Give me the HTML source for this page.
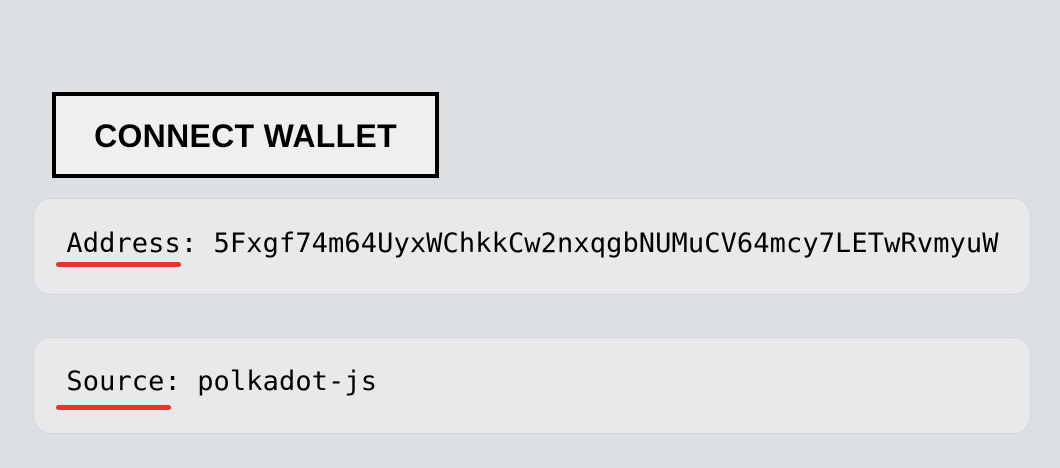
<!DOCTYPE html>
<html><head><style>
body{margin:0;width:1060px;height:468px;background:#dde0e2;position:relative;overflow:hidden}
.btn{position:absolute;left:52px;top:92px;width:379px;height:78px;border:4px solid #000;background:#efefef;font:bold 32px "Liberation Sans",sans-serif;text-align:center;line-height:80px;color:#000;letter-spacing:0.3px}
.box{position:absolute;left:33px;width:996px;height:95px;border:1px solid #d3d5d8;border-radius:18px;background:#e8e9eb}
.t{position:absolute;left:50px;font:27px "DejaVu Sans Mono","Liberation Mono",monospace;color:#000;white-space:pre;letter-spacing:0.1px}
.u{position:absolute;left:56px;height:5px;background:#e8342a;border-radius:3px}
</style></head><body>
<div class="btn">CONNECT WALLET</div>
<div class="box" style="top:198px"></div>
<div class="t" style="top:228px"> Address: 5Fxgf74m64UyxWChkkCw2nxqgbNUMuCV64mcy7LETwRvmyuW</div>
<div class="u" style="top:262px;width:125px"></div>
<div class="box" style="top:337px"></div>
<div class="t" style="top:366px"> Source: polkadot-js</div>
<div class="u" style="top:405px;width:115px"></div>
</body></html>
